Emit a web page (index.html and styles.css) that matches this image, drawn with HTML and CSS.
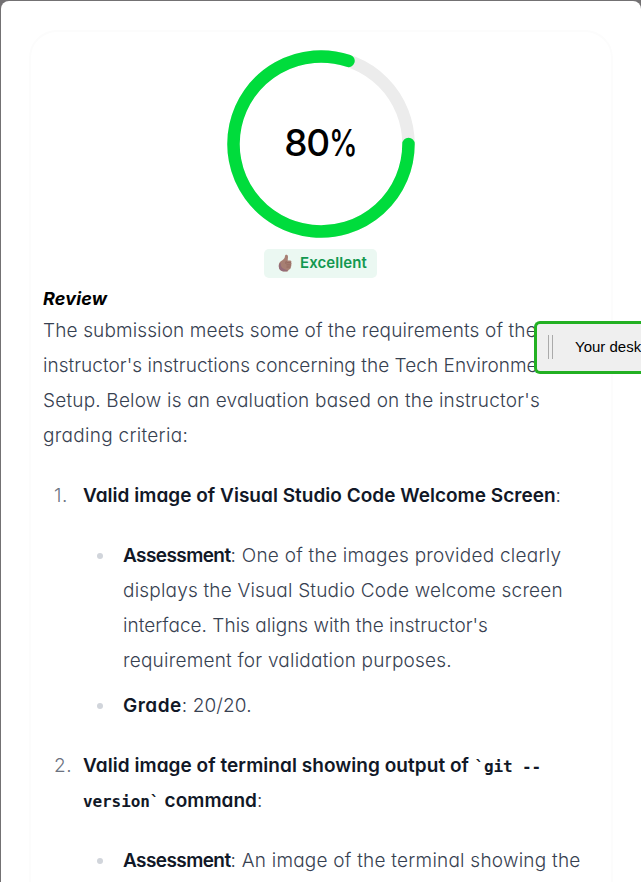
FILE: index.html
```html
<!DOCTYPE html>
<html lang="en">
<head>
<meta charset="utf-8">
<title>Review</title>
<link rel="stylesheet" href="styles.css">
</head>
<body>
<main class="modal">
  <section class="card">
    <div class="gauge">
      <svg class="ring" viewBox="0 0 188 188">
        <circle class="track" cx="94" cy="94" r="87.5"/>
        <path class="value" d="M181.500 94A87.500 87.500 0 1 1 121.500 10.900"/>
      </svg>
      <span class="score">80<span class="percent">%</span></span>
    </div>
    <div class="badge">
      <svg class="thumb" viewBox="0 0 16 18">
        <path fill="#a77f73" d="M8 2C8.200.4 11 .3 11 2.900L10.700 6.500h2.500c1.200 0 1.500 1.200 1 2 .5.700.5 1.600 0 2.200.3.800.1 1.600-.4 2.100.2 1.300-.5 2.500-1.800 2.700l-1.500 1.900c-2 .3-4.500.2-6.300-.7C2.200 15.700 1.600 13.500 1.800 11c.2-2 1.500-3.300 3.200-4.400C7 5.300 7.800 4 8 2z"/>
        <path fill="#946b78" d="M2 10.500l1.500-2L4 12c1 2 2.800 3.400 6.500 4.500-.3 1-1.500.9-3.500.8-3.500-.2-5.700-2.300-5-6.800z"/>
        <path fill="none" stroke="#875c54" stroke-width=".6" d="M9.500 8.700h4.500M9.400 10.900h4.600M9.500 13h4M9.600 7c-1 1-1.200 2-.4 3"/>
      </svg>
      <span class="label">Excellent</span>
    </div>
    <h2 class="title">Review</h2>
    <div class="prose">
      <p><span class="a1">The submission meets some of the requirements of the</span><br>
      <span class="a2">instructor's instructions concerning the Tech Environment</span><br>
      <span class="a3">Setup. Below is an evaluation based on the instructor's</span><br>
      <span class="a4">grading criteria:</span></p>
      <ol>
        <li><span class="num">1.</span><p><b>Valid image of Visual Studio Code Welcome Screen</b>:</p>
          <ul>
            <li><b class="b2">Assessment</b><span class="c1">: One of the images provided clearly</span><br>
            <span class="c2">displays the Visual Studio Code welcome screen</span><br>
            <span class="c3">interface. This aligns with the instructor's</span><br>
            <span class="c4">requirement for validation purposes.</span></li>
            <li><b class="b3">Grade</b><span class="c5">: 20/20.</span></li>
          </ul>
        </li>
        <li><span class="num">2.</span><p><b class="b4">Valid image of terminal showing output of</b> <code>`git --</code><br><code>version`</code> <b>command</b>:</p>
          <ul>
            <li><b class="b2">Assessment</b><span class="c6">: An image of the terminal showing the</span></li>
          </ul>
        </li>
      </ol>
    </div>
  </section>
</main>
<aside class="popup"><i class="grip"></i><span>Your desk</span></aside>
</body>
</html>
```
FILE: styles.css
```css
* { box-sizing: border-box; }
body { margin: 0; background: #737173; height: 882px; overflow: hidden; font-family: Inter, "Liberation Sans", sans-serif; font-feature-settings: "cv11"; position: relative; }
.modal { margin: 1px 0 0 1px; height: 881px; overflow: hidden; background: #fff; border-radius: 8px 8px 0 0; padding: 29px 28px 0 28px; }
.card { height: 900px; border: 2px solid #fcfcfc; border-radius: 28px; padding: 18px 12px 0; display: flex; flex-direction: column; align-items: center; }
.gauge { width: 188px; height: 188px; display: grid; place-items: center; }
.gauge > * { grid-area: 1 / 1; }
.ring { width: 188px; height: 188px; }
.track { fill: none; stroke: #ececec; stroke-width: 12.5; }
.value { fill: none; stroke: #00dc3c; stroke-width: 12.5; stroke-linecap: round; }
.score { font-size: 37px; font-weight: 500; letter-spacing: -1.2px; margin-top: -3px; white-space: nowrap; }
.percent { display: inline-block; letter-spacing: 0; transform: scaleX(.78); transform-origin: left; margin-right: -8px; }
.badge { margin-top: 11px; margin-right: 1px; width: 113px; height: 29px; border-radius: 5px; background: #ebf8f2; display: flex; align-items: center; padding-left: 13px; color: #129850; font-size: 15px; font-weight: 600; letter-spacing: .08px; }
.label { margin-top: -2px; }
.thumb { width: 16px; height: 18px; margin-right: 7px; margin-top: -2px; }
.title { margin: 7px 0 0; align-self: stretch; height: 28px; line-height: 28px; font-size: 18px; font-weight: 700; font-style: italic; letter-spacing: .15px; }
.prose { align-self: stretch; font-size: 19px; font-weight: 300; line-height: 35px; color: #374151; white-space: nowrap; }
.prose p { margin: 0; }
ol, ul { list-style: none; margin: 25px 0 0; padding: 0; }
ol > li { padding-left: 40px; position: relative; margin-bottom: 25px; }
.num { position: absolute; left: 11px; color: #6b7280; letter-spacing: .5px; }
ul > li { padding-left: 40px; position: relative; margin-bottom: 10px; }
ul > li::before { content: ""; position: absolute; left: 14px; top: 15px; width: 6px; height: 6px; border-radius: 50%; background: #d1d5db; }
b { font-weight: 600; color: #111827; letter-spacing: .02px; }
code { font: 700 16px/1 "DejaVu Sans Mono", monospace; color: #111827; letter-spacing: -.1px; }
.a1 { letter-spacing: .13px; }
.a2 { letter-spacing: .04px; }
.a3 { letter-spacing: .19px; }
.a4 { letter-spacing: .29px; }
.b2 { letter-spacing: -.58px; }
.b3 { letter-spacing: .5px; }
.b4 { letter-spacing: .05px; }
.c1 { letter-spacing: .25px; }
.c2 { letter-spacing: .19px; }
.c3 { letter-spacing: .02px; }
.c4 { letter-spacing: .22px; }
.c5 { letter-spacing: .1px; }
.c6 { letter-spacing: .23px; }
.popup { position: absolute; left: 534px; top: 321px; width: 107px; overflow: hidden; white-space: nowrap; height: 53px; border: 3px solid #22b022; border-right: 0; border-radius: 6px 0 0 6px; background: #efefef; display: flex; align-items: center; padding: 0 0 2px 11px; font: 15px "Liberation Sans", sans-serif; }
.grip { flex: none; width: 5px; height: 24px; border: solid #aaa; border-width: 0 1px; margin-right: 22px; }
```
